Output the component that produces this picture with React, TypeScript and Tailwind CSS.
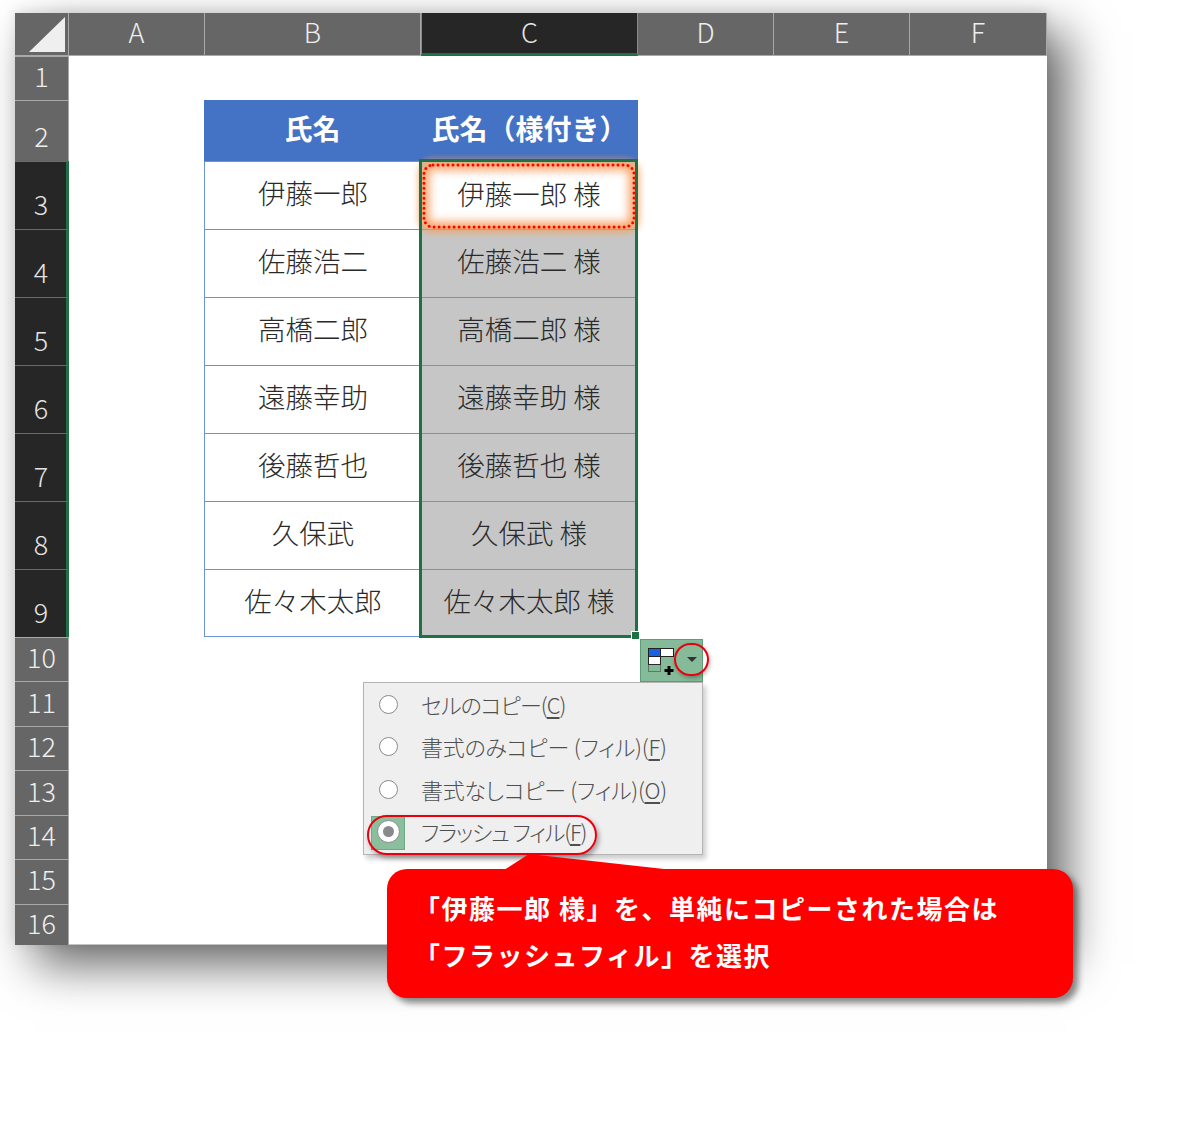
const cols = ["A", "B", "C", "D", "E", "F"];
const font = "font-['Noto_Sans_CJK_JP','Noto_Sans',sans-serif]";

const rows: { n: number; b?: string; c?: string }[] = [
  { n: 1 },
  { n: 2, b: "氏名", c: "氏名（様付き）" },
  { n: 3, b: "伊藤一郎", c: "伊藤一郎 様" },
  { n: 4, b: "佐藤浩二", c: "佐藤浩二 様" },
  { n: 5, b: "高橋二郎", c: "高橋二郎 様" },
  { n: 6, b: "遠藤幸助", c: "遠藤幸助 様" },
  { n: 7, b: "後藤哲也", c: "後藤哲也 様" },
  { n: 8, b: "久保武", c: "久保武 様" },
  { n: 9, b: "佐々木太郎", c: "佐々木太郎 様" },
  { n: 10 },
  { n: 11 },
  { n: 12 },
  { n: 13 },
  { n: 14 },
  { n: 15 },
  { n: 16 },
];

function RowHead({ n }: { n: number }) {
  const selected = n >= 3 && n <= 9;
  const pad = n === 16 ? "pb-[7px]" : selected || n === 2 || n === 15 ? "pb-[10px]" : "pb-[9px]";
  return (
    <div
      className={
        selected
          ? `flex items-end justify-center bg-[#262626] border-t border-[#6a6a6a] border-r-[3px] border-r-[#1f7145] ${pad} pl-[1px] text-[27px] leading-[30px] font-light text-[#e4e4e4]`
          : `flex items-end justify-center bg-[#666666] border-t border-[#a8a8a8] border-r border-r-[#a8a8a8] ${pad} text-[27px] leading-[30px] font-light text-[#eeeeee]`
      }
    >
      {n}
    </div>
  );
}

function TableCells({ n, b, c }: { n: number; b?: string; c?: string }) {
  if (n === 2) {
    return (
      <>
        <div className="-ml-[1px] flex items-center justify-center bg-[#4472c4] pb-[6px] text-[28px] font-bold text-white">{b}</div>
        <div className="flex items-center justify-center bg-[#4472c4] pb-[6px] text-[28px] font-bold text-white">{c}</div>
      </>
    );
  }
  if (!b) {
    return (
      <>
        <div />
        <div />
      </>
    );
  }
  return (
    <>
      <div
        className={
          n === 9
            ? "-ml-[1px] flex items-center justify-center bg-white border-l border-t border-b border-[#6f92d4] pb-[4px] text-[27.5px] font-light text-[#2a2a2a]"
            : "-ml-[1px] flex items-center justify-center bg-white border-l border-t border-[#6f92d4] pb-[5px] text-[27.5px] font-light text-[#2a2a2a]"
        }
      >
        {b}
      </div>
      <div className="flex items-center justify-center bg-[#c6c6c6] border-t border-r border-[#6f92d4] pb-[5px] text-[27.5px] font-light text-[#2a2a2a]">
        {c}
      </div>
    </>
  );
}

function Radio({ on }: { on?: boolean }) {
  if (on) {
    return (
      <span className="-m-[2px] flex h-[23px] w-[23px] items-center justify-center rounded-full border border-[#8a8a8a] bg-white">
        <span className="h-[11px] w-[11px] rounded-full bg-[#8a8a8a]" />
      </span>
    );
  }
  return <span className="block h-[19px] w-[19px] rounded-full border border-[#8a8a8a] bg-white" />;
}

function MenuItem({ label, k, on, spacing }: { label: string; k: string; on?: boolean; spacing: string }) {
  return (
    <div className="relative flex h-[42.5px] items-center pl-[15px]">
      {on && <div className="absolute left-[7px] top-[5px] h-[34px] w-[34px] border border-[#6fa886] bg-[#8abf9d]" />}
      <span className="relative">
        <Radio on={on} />
      </span>
      <span className={`relative ml-[23px] text-[22px] font-light text-[#4f4f4f] [font-feature-settings:'palt'] ${spacing}`}>
        {label}(<span className="underline underline-offset-[3px]">{k}</span>)
      </span>
      {on && (
        <div className="absolute left-[3px] top-[4px] h-[40px] w-[230px] rounded-[20px] border-[2px] border-[#e8000f] shadow-[2px_3px_5px_rgba(0,0,0,0.35)]" />
      )}
    </div>
  );
}

export default function App() {
  return (
    <div className={`relative h-[1125px] w-[1200px] overflow-hidden bg-white pl-[15px] pt-[13px] ${font}`}>
      <div className="relative h-[932px] w-[1032px] bg-white shadow-[20px_20px_45px_rgba(0,0,0,0.6),0_-2px_12px_rgba(0,0,0,0.1)]">
        <div className="grid h-full grid-cols-[54px_136px_216px_217px_136px_136px_137px] grid-rows-[43px_44px_61px_68px_68px_68px_68px_68px_68px_68px_44px_45px_44px_45px_44px_45px_41px] border-b border-[#c4c4c4]">
          {/* corner */}
          <div className="relative bg-[#666666] border-r border-b border-[#a8a8a8]">
            <svg className="absolute inset-0" width="54" height="43" viewBox="0 0 54 43">
              <polygon points="14,39 50,4 50,39" fill="#efefef" />
            </svg>
          </div>
          {cols.map((c) => (
            <div
              key={c}
              className={
                c === "C"
                  ? "flex items-center justify-center bg-[#262626] border-x border-[#8a8a8a] border-b-[3px] border-b-[#1f7145] pb-[1px] text-[27px] font-light text-[#e4e4e4]"
                  : "flex items-center justify-center bg-[#666666] border-r border-b border-[#a8a8a8] pb-[3px] text-[27px] font-light text-[#eeeeee]"
              }
            >
              {c}
            </div>
          ))}
          {rows.map((r) => (
            <div key={r.n} className="contents">
              <RowHead n={r.n} />
              <div />
              <TableCells n={r.n} b={r.b} c={r.c} />
              <div />
              <div />
              <div />
            </div>
          ))}
        </div>

        {/* first cell highlight */}
        <div className="absolute left-[407px] top-[150px] flex h-[66px] w-[214px] items-center justify-center rounded-[10px] bg-white pb-[4px] text-[27.5px] font-light text-[#2a2a2a] shadow-[0_0_6px_4px_rgba(245,160,90,0.7),inset_0_0_10px_7px_rgba(245,130,50,0.75)]">
          伊藤一郎 様
          <svg className="absolute inset-0" width="214" height="66" viewBox="0 0 214 66">
            <rect x="2" y="2" width="210" height="62" rx="9" fill="none" stroke="#ff0000" strokeWidth="3" strokeLinecap="round" strokeDasharray="0 5" />
          </svg>
        </div>

        {/* selection */}
        <div className="pointer-events-none absolute left-[404px] top-[146px] h-[479px] w-[219px] border-[3px] border-[#1f7145]" />
        <div className="absolute left-[616px] top-[618px] h-[9px] w-[9px] border border-white bg-[#1f7145]" />

        {/* autofill button */}
        <div className="absolute left-[625px] top-[626px] h-[43px] w-[63px] border border-[#5d9c76] bg-[#85bb98]">
          <svg width="61" height="41" viewBox="0 0 61 41">
            <rect x="7.5" y="8.5" width="12" height="8" fill="#1a62e0" stroke="#222" />
            <rect x="19.5" y="8.5" width="13" height="8" fill="#fff" stroke="#222" />
            <rect x="7.5" y="16.5" width="12" height="8" fill="#fff" stroke="#222" />
            <rect x="7.5" y="24.5" width="12" height="7" fill="none" stroke="#333" strokeDasharray="1 1" />
            <path d="M26.5 26h3v3h3v3h-3v3h-3v-3h-3v-3h3z" fill="#000" />
            <polygon points="46,17 56,17 51,22" fill="#333" />
          </svg>
          <div className="absolute left-[33px] top-[3px] h-[33px] w-[35px] rounded-full border-[2px] border-[#e8000f] shadow-[1px_2px_4px_rgba(0,0,0,0.3)]" />
        </div>

        {/* paste options */}
        <div className="absolute left-[348px] top-[669px] h-[173px] w-[340px] border border-[#b4b4b4] bg-[#efefef] shadow-[3px_4px_5px_rgba(0,0,0,0.2)]">
          <MenuItem label="セルのコピー" k="C" spacing="tracking-[-1px]" />
          <MenuItem label="書式のみコピー (フィル)" k="F" spacing="tracking-[-0.25px]" />
          <MenuItem label="書式なしコピー (フィル)" k="O" spacing="tracking-[-0.35px]" />
          <MenuItem label="フラッシュ フィル" k="F" on spacing="tracking-[-1.2px]" />
        </div>

        {/* callout */}
        <div className="absolute left-[372px] top-[856px] h-[129px] w-[686px] rounded-[20px] bg-[#ff0000] pl-[27px] pt-[15px] text-[26px] leading-[47px] font-bold tracking-[1.5px] text-white shadow-[5px_5px_6px_rgba(0,0,0,0.45)]">
          <div>「伊藤一郎 様」を、単純にコピーされた場合は</div>
          <div>「フラッシュフィル」を選択</div>
          <svg className="absolute left-[115px] top-[-15px]" width="175" height="16" viewBox="0 0 175 16">
            <polygon points="2,16 27,0 171,16" fill="#ff0000" />
          </svg>
        </div>
      </div>
    </div>
  );
}
